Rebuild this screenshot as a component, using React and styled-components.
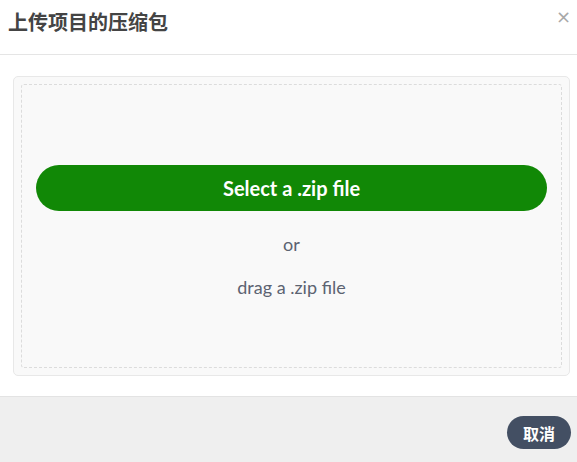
import React from "react";
import styled, {createGlobalStyle} from "styled-components";

const GlobalStyle = createGlobalStyle`
    html, body{
        margin: 0;
        padding: 0;
        background: #ffffff;
    }
    body{
        font-family: Lato, "Noto Sans CJK SC", sans-serif;
    }
`;

function App(){
    return(
        <>
            <GlobalStyle/>
            <Modal>
                <Header>
                    <h3>上传项目的压缩包</h3>
                    <button className="close">×</button>
                </Header>
                <Body>
                    <DropZone>
                        <div className="dashed">
                            <SelectButton>Select a .zip file</SelectButton>
                            <Hint>or</Hint>
                            <Hint>drag a .zip file</Hint>
                        </div>
                    </DropZone>
                </Body>
                <Footer>
                    <CancelButton>取消</CancelButton>
                </Footer>
            </Modal>
        </>
    );
}

const Modal = styled.div`
    width: 577px;
    height: 462px;
    display: flex;
    flex-direction: column;
    background: #ffffff;
`;

const Header = styled.div`
    height: 54px;
    border-bottom: 1px solid #e5e5e5;
    display: flex;
    align-items: center;
    justify-content: space-between;
    padding: 0 6px 0 8px;
    h3{
        margin: 0;
        margin-top: -12px;
        font-family: "Noto Sans CJK SC", sans-serif;
        font-size: 20px;
        font-weight: 700;
        color: #444444;
        line-height: 1;
        padding-top: 2px;
    }
    .close{
        align-self: flex-start;
        margin-top: 5px;
        background: none;
        border: none;
        padding: 0;
        font-family: "DejaVu Sans", sans-serif;
        font-size: 18px;
        line-height: 24px;
        color: #a8a8a8;
        cursor: pointer;
    }
`;

const Body = styled.div`
    padding: 21px 7px 20px 13px;
`;

const DropZone = styled.div`
    border: 1px solid #e8e8e8;
    border-radius: 5px;
    background: #f9f9f9;
    padding: 7px;
    .dashed{
        height: 284px;
        box-sizing: border-box;
        border: 1px dashed #dcdcdc;
        border-radius: 3px;
        padding: 80px 14px 0;
        display: flex;
        flex-direction: column;
        align-items: stretch;
    }
`;

const SelectButton = styled.button`
    height: 46px;
    border: none;
    border-radius: 23px;
    background: #118806;
    color: #ffffff;
    font-family: Lato, sans-serif;
    font-weight: 700;
    font-size: 20px;
    cursor: pointer;
    margin-bottom: 22px;
`;

const Hint = styled.div`
    text-align: center;
    font-family: Lato, sans-serif;
    font-size: 18px;
    color: #5c6371;
    line-height: 22px;
    margin-bottom: 21px;
`;

const Footer = styled.div`
    flex: 1;
    background: #efefef;
    border-top: 1px solid #e3e3e3;
    display: flex;
    justify-content: flex-end;
    align-items: flex-start;
    padding: 19px 6px 0 0;
`;

const CancelButton = styled.button`
    width: 64px;
    height: 33px;
    border: none;
    border-radius: 17px;
    background: #434f63;
    color: #ffffff;
    font-family: "Noto Sans CJK SC", sans-serif;
    font-weight: 700;
    font-size: 16px;
    cursor: pointer;
`;

export default App;
